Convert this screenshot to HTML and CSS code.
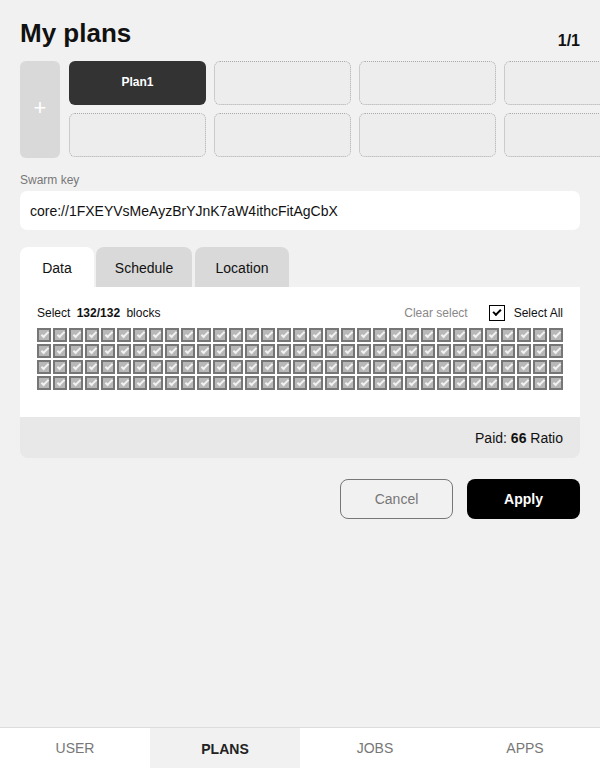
FILE: index.html
```html
<!DOCTYPE html>
<html>
<head>
<meta charset="utf-8">
<link rel="stylesheet" href="styles.css">
</head>
<body>
<div class="page">
  <header class="head">
    <h1 class="title">My plans</h1>
    <div class="pager">1/<b>1</b></div>
  </header>

  <section class="plans">
    <button class="add">+</button>
    <div class="plan-grid">
      <div class="plan active">Plan1</div>
      <div class="plan"></div>
      <div class="plan"></div>
      <div class="plan"></div>
      <div class="plan"></div>
      <div class="plan"></div>
      <div class="plan"></div>
      <div class="plan"></div>
    </div>
  </section>

  <label class="key-label">Swarm key</label>
  <div class="key-input">core://1FXEYVsMeAyzBrYJnK7aW4ithcFitAgCbX</div>

  <nav class="tabs">
    <div class="tab on">Data</div>
    <div class="tab tab-sched">Schedule</div>
    <div class="tab tab-loc">Location</div>
  </nav>
  <div class="panel">
    <div class="panel-body">
      <div class="sel-row">
        <div class="sel-count">Select <b>132/132</b> blocks</div>
        <div class="sel-actions">
          <span class="clear">Clear select</span>
          <span class="all"><span class="box"></span>Select All</span>
        </div>
      </div>
      <div class="blocks">
        <i></i><i></i><i></i><i></i><i></i><i></i><i></i><i></i><i></i><i></i><i></i><i></i><i></i><i></i><i></i><i></i><i></i><i></i><i></i><i></i><i></i><i></i><i></i><i></i><i></i><i></i><i></i><i></i><i></i><i></i><i></i><i></i><i></i>
        <i></i><i></i><i></i><i></i><i></i><i></i><i></i><i></i><i></i><i></i><i></i><i></i><i></i><i></i><i></i><i></i><i></i><i></i><i></i><i></i><i></i><i></i><i></i><i></i><i></i><i></i><i></i><i></i><i></i><i></i><i></i><i></i><i></i>
        <i></i><i></i><i></i><i></i><i></i><i></i><i></i><i></i><i></i><i></i><i></i><i></i><i></i><i></i><i></i><i></i><i></i><i></i><i></i><i></i><i></i><i></i><i></i><i></i><i></i><i></i><i></i><i></i><i></i><i></i><i></i><i></i><i></i>
        <i></i><i></i><i></i><i></i><i></i><i></i><i></i><i></i><i></i><i></i><i></i><i></i><i></i><i></i><i></i><i></i><i></i><i></i><i></i><i></i><i></i><i></i><i></i><i></i><i></i><i></i><i></i><i></i><i></i><i></i><i></i><i></i><i></i>
      </div>
    </div>
    <div class="panel-foot">Paid:&nbsp;<b>66</b>&nbsp;Ratio</div>
  </div>

  <div class="actions">
    <button class="btn cancel">Cancel</button>
    <button class="btn apply">Apply</button>
  </div>
</div>

<footer class="nav">
  <div class="nav-item">USER</div>
  <div class="nav-item cur">PLANS</div>
  <div class="nav-item">JOBS</div>
  <div class="nav-item">APPS</div>
</footer>
</body>
</html>
```

FILE: styles.css
```css
* { box-sizing: border-box; }
html, body { margin: 0; padding: 0; }
body {
  background: #f1f1f1;
  font-family: "Liberation Sans", Arial, sans-serif;
  color: #111;
  width: 600px;
  height: 768px;
  overflow: hidden;
}
.page { padding: 0 20px; }

.head {
  display: flex;
  align-items: flex-end;
  justify-content: space-between;
  padding-top: 17px;
  height: 61px;
  padding-bottom: 12px;
}
.title {
  margin: 0;
  font-size: 26px;
  font-weight: bold;
  line-height: 32px;
}
.pager { font-size: 16px; font-weight: 600; line-height: 18px; margin-bottom: -1px; }
.pager b { font-weight: 800; }

.plans { display: flex; height: 97px; margin-right: -20px; overflow: hidden; }
.add {
  flex: 0 0 40px;
  height: 97px;
  border: 0;
  border-radius: 6px;
  background: #d9d9d9;
  color: #fff;
  font-family: "Liberation Sans", Arial, sans-serif;
  font-size: 22px;
  padding: 0 0 4px;
}
.plan-grid {
  margin-left: 9px;
  display: grid;
  grid-template-columns: repeat(4, 137px);
  grid-auto-rows: 44px;
  column-gap: 8px;
  row-gap: 8px;
  flex: none;
}
.plan {
  border: 1px dotted #aaa;
  border-radius: 6px;
  background: #ededed;
}
.plan.active {
  border: 0;
  background: #333;
  color: #fff;
  font-size: 12px;
  font-weight: bold;
  display: flex;
  align-items: center;
  justify-content: center;
  padding-bottom: 2px;
}

.key-label {
  display: block;
  margin-top: 15px;
  font-size: 12px;
  color: #777;
  line-height: 14px;
}
.key-input {
  margin-top: 4px;
  height: 39px;
  background: #fff;
  border-radius: 7px;
  padding: 0 10px;
  display: flex;
  align-items: center;
  font-size: 14px;
  color: #111;
}

.tabs { display: flex; margin-top: 17px; height: 40px; }
.tab {
  height: 40px;
  border-radius: 8px 8px 0 0;
  background: #d9d9d9;
  font-size: 14px;
  display: flex;
  align-items: center;
  justify-content: center;
  padding-top: 2px;
}
.tab.on { background: #fff; width: 74px; }
.tab-sched { width: 96px; margin-left: 2px; }
.tab-loc { width: 94px; margin-left: 3px; }

.panel { border-radius: 0 0 8px 8px; overflow: hidden; }
.panel-body { background: #fff; height: 130px; padding: 18px 17px 0; }
.sel-row {
  display: flex;
  justify-content: space-between;
  align-items: center;
  height: 16px;
  font-size: 12px;
}
.sel-count b { font-weight: bold; margin: 0 3px; }
.sel-actions { display: flex; align-items: center; }
.clear { color: #888; margin-right: 21px; }
.all { display: flex; align-items: center; }
.box {
  position: relative;
  width: 16px;
  height: 16px;
  border: 1.5px solid #000;
  background: #fff;
  margin-right: 9px;
}
.box::after {
  content: "";
  position: absolute;
  left: 3.5px;
  top: 3px;
  width: 6px;
  height: 3px;
  border-left: 2px solid #000;
  border-bottom: 2px solid #000;
  transform: rotate(-45deg);
}
.blocks {
  margin-top: 7px;
  display: grid;
  grid-template-columns: repeat(33, 14px);
  grid-auto-rows: 14px;
  gap: 2px;
}
.blocks i {
  position: relative;
  display: block;
  width: 14px;
  height: 14px;
  border: 2px solid #767676;
  background: #b8b8b8;
}
.blocks i::after {
  content: "";
  position: absolute;
  left: 2px;
  top: 2px;
  width: 6px;
  height: 2px;
  border-left: 2px solid #f2f2f2;
  border-bottom: 2px solid #f2f2f2;
  transform: rotate(-45deg);
}

.panel-foot {
  background: #e8e8e8;
  height: 41px;
  display: flex;
  align-items: center;
  justify-content: flex-end;
  padding-right: 17px;
  font-size: 14px;
}

.actions {
  display: flex;
  justify-content: flex-end;
  margin-top: 21px;
  gap: 14px;
}
.btn {
  width: 113px;
  height: 40px;
  border-radius: 8px;
  font-family: "Liberation Sans", Arial, sans-serif;
  font-size: 14px;
}
.cancel { background: transparent; border: 1px solid #777; color: #777; }
.apply { background: #000; border: 0; color: #fff; font-weight: bold; }

.nav {
  position: fixed;
  left: 0;
  bottom: 0;
  width: 600px;
  height: 41px;
  display: flex;
  background: #fff;
  border-top: 1px solid #ddd;
}
.nav-item {
  flex: 1;
  display: flex;
  align-items: center;
  justify-content: center;
  font-size: 14px;
  color: #777;
}
.nav-item.cur { background: #f1f1f1; color: #222; font-weight: bold; padding-top: 2px; }
```
